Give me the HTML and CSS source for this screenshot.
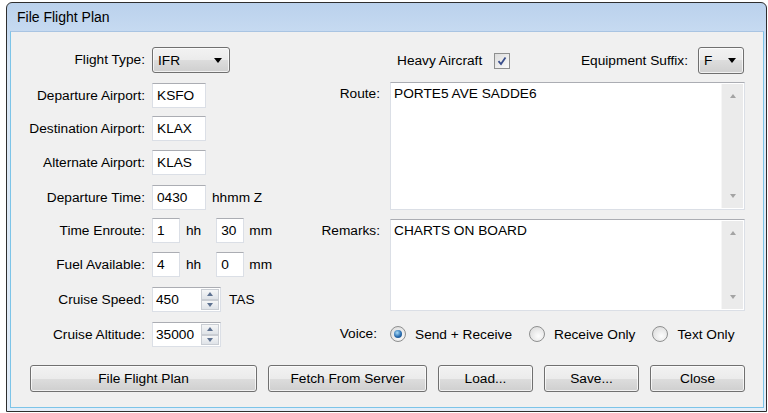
FILE: index.html
```html
<!DOCTYPE html>
<html lang="en">
<head>
  <meta charset="utf-8">
  <title>File Flight Plan</title>
  <link rel="stylesheet" href="styles.css">
</head>
<body>
  <div class="window">
    <div class="titlebar">File Flight Plan</div>

    <div class="client">
      <div class="main">

        <!-- left column: flight data -->
        <div class="left">
          <span class="lbl tall">Flight Type:</span>
          <div class="combo type">
            <span>IFR</span>
            <svg width="8" height="5" viewBox="0 0 8 5"><polygon points="0,0 8,0 4,5" fill="#000"/></svg>
          </div>

          <span class="lbl">Departure Airport:</span>
          <div class="field"><span class="edit w54">KSFO</span></div>

          <span class="lbl">Destination Airport:</span>
          <div class="field"><span class="edit w54">KLAX</span></div>

          <span class="lbl">Alternate Airport:</span>
          <div class="field"><span class="edit w54">KLAS</span></div>

          <span class="lbl">Departure Time:</span>
          <div class="field"><span class="edit w54">0430</span><span class="unit">hhmm Z</span></div>

          <span class="lbl">Time Enroute:</span>
          <div class="field">
            <span class="edit w28">1</span><span class="unit hh">hh</span>
            <span class="edit w28">30</span><span class="unit mm">mm</span>
          </div>

          <span class="lbl">Fuel Available:</span>
          <div class="field">
            <span class="edit w28">4</span><span class="unit hh">hh</span>
            <span class="edit w28">0</span><span class="unit mm">mm</span>
          </div>

          <span class="lbl">Cruise Speed:</span>
          <div class="field">
            <div class="spin"><span class="spin-text">450</span><div class="spin-btns"><i class="sb up"></i><i class="sb down"></i></div></div>
            <span class="unit tas">TAS</span>
          </div>

          <span class="lbl">Cruise Altitude:</span>
          <div class="field">
            <div class="spin"><span class="spin-text">35000</span><div class="spin-btns"><i class="sb up"></i><i class="sb down"></i></div></div>
          </div>
        </div>

        <!-- right column: route, remarks, voice -->
        <div class="right">
          <span></span>
          <div class="toprow">
            <span class="heavy">Heavy Aircraft</span>
            <span class="check">
              <svg width="14" height="14" viewBox="0 0 14 14"><path d="M3.5 7.2 L6 10 L10.5 3.5" fill="none" stroke="#3b4f8c" stroke-width="1.8"/></svg>
            </span>
            <span class="suffix">Equipment Suffix:</span>
            <div class="combo eq">
              <span>F</span>
              <svg width="8" height="5" viewBox="0 0 8 5"><polygon points="0,0 8,0 4,5" fill="#000"/></svg>
            </div>
          </div>

          <span class="lbl top">Route:</span>
          <div class="memo route">
            <div class="memo-text">PORTE5 AVE SADDE6</div>
            <div class="vscroll"><i class="arr up"></i><i class="arr down"></i></div>
          </div>

          <span class="lbl top">Remarks:</span>
          <div class="memo remarks">
            <div class="memo-text">CHARTS ON BOARD</div>
            <div class="vscroll"><i class="arr up"></i><i class="arr down"></i></div>
          </div>

          <span class="lbl voice">Voice:</span>
          <div class="radios">
            <span class="radio on"></span><span class="rtext">Send + Receive</span>
            <span class="radio"></span><span class="rtext">Receive Only</span>
            <span class="radio"></span><span class="rtext">Text Only</span>
          </div>
        </div>
      </div>

      <div class="buttons">
        <button class="btn file">File Flight Plan</button>
        <button class="btn fetch">Fetch From Server</button>
        <button class="btn small">Load...</button>
        <button class="btn small">Save...</button>
        <button class="btn small">Close</button>
      </div>
    </div>
  </div>
</body>
</html>
```

FILE: styles.css
```css
/* Windows 7 style dialog */
body {
  margin: 0;
  background: #fff;
  font-family: "Liberation Sans", Arial, sans-serif;
  font-size: 13.7px;
  color: #000;
}
.window {
  box-sizing: border-box;
  width: 761px;
  height: 410px;
  margin: 2px 0 0 6px;
  border: 1px solid #2e2e2e;
  border-radius: 6px 6px 0 0;
  background: linear-gradient(#bad1ec 0, #c6daf1 28px, #d9e7f5 60px, #e3edf8 100%);
  display: flex;
  flex-direction: column;
}
.titlebar {
  height: 28px;
  line-height: 28px;
  padding-left: 10px;
  font-size: 14px;
  color: #000;
}
.client {
  flex: 1;
  margin: 0 2px 3px 3px;
  border: 1px solid #7cc4e8;
  border-top-color: #a9c4e2;
  background: #f0f0f0;
  padding-top: 15px;
}
.main {
  display: flex;
}

/* left grid */
.left {
  width: 289px;
  display: grid;
  grid-template-columns: 134px auto;
  column-gap: 7px;
  grid-template-rows: 36px 33px 34px 35px 33px 34px 35px 35px 26px;
  align-items: start;
}
.lbl {
  text-align: right;
  line-height: 25px;
  white-space: nowrap;
}
.lbl.tall {
  line-height: 26px;
}
.field {
  display: flex;
  align-items: center;
  height: 25px;
}
.edit {
  box-sizing: border-box;
  height: 25px;
  line-height: 23px;
  padding-left: 4px;
  background: #fff;
  border: 1px solid #dbdfe6;
  border-top-color: #abadb3;
}
.w54 { width: 54px; }
.w28 { width: 28px; }
.unit { margin-left: 6px; }
.unit.hh { margin-right: 15px; }
.unit.mm { margin-left: 5px; }
.unit.tas { margin-left: 8px; }

/* combo boxes and buttons share the Aero look */
.combo, .btn {
  box-sizing: border-box;
  border: 1px solid #707070;
  border-radius: 3px;
  background: linear-gradient(#f2f2f2 0%, #ebebeb 50%, #dddddd 50%, #cfcfcf 100%);
  box-shadow: inset 0 0 0 1px rgba(255,255,255,0.7);
}
.combo {
  display: flex;
  align-items: center;
  justify-content: space-between;
  height: 26px;
  padding: 0 7px 0 5px;
}
.combo.type { width: 78px; }
.combo.eq { width: 46px; height: 27px; }

/* numeric spinners */
.spin {
  box-sizing: border-box;
  width: 69px;
  height: 25px;
  display: flex;
  background: #fff;
  border: 1px solid #dbdfe6;
  border-top-color: #abadb3;
}
.spin-text {
  flex: 1;
  line-height: 23px;
  padding-left: 3px;
}
.spin-btns {
  width: 18px;
  margin: 1px;
  display: flex;
  flex-direction: column;
}
.sb {
  flex: 1;
  box-sizing: border-box;
  border: 1px solid #c9cdd3;
  background: linear-gradient(#f5f6f7, #dfe3e8);
  display: flex;
  align-items: center;
  justify-content: center;
}
.sb::after {
  content: "";
  border-left: 3.5px solid transparent;
  border-right: 3.5px solid transparent;
}
.sb.up::after { border-bottom: 4px solid #5d7190; }
.sb.down::after { border-top: 4px solid #5d7190; }

/* right grid */
.right {
  display: grid;
  grid-template-columns: 80px 355px;
  column-gap: 10px;
  grid-template-rows: 35px 137px 101px 28px;
  align-items: start;
}
.toprow {
  display: flex;
  align-items: center;
  height: 27px;
  padding-left: 7px;
}
.check {
  box-sizing: border-box;
  width: 16px;
  height: 16px;
  margin-left: 12px;
  border: 1px solid #8e8f8f;
  background: linear-gradient(135deg, #dcdcdc, #fbfbfb);
  display: flex;
  align-items: center;
  justify-content: center;
}
.suffix {
  margin-left: auto;
  margin-right: 10px;
}
.combo.eq {
  margin-right: 1px;
}
.lbl.top {
  line-height: 17px;
  padding-top: 3px;
}
.memo {
  box-sizing: border-box;
  display: flex;
  background: #fff;
  border: 1px solid #dbdfe6;
  border-top-color: #abadb3;
}
.memo.route { height: 128px; }
.memo.remarks { height: 92px; }
.memo-text {
  flex: 1;
  padding: 2px 3px;
  line-height: 17px;
}
.vscroll {
  width: 21px;
  margin: 1px;
  background: #ebebeb;
  border-left: 1px solid #f6f6f6;
  display: flex;
  flex-direction: column;
  justify-content: space-between;
}
.arr {
  height: 24px;
  display: flex;
  align-items: center;
  justify-content: center;
}
.arr::after {
  content: "";
  border-left: 3.5px solid transparent;
  border-right: 3.5px solid transparent;
}
.arr.up::after { border-bottom: 4px solid #a3a3a3; }
.arr.down::after { border-top: 4px solid #a3a3a3; }

/* voice radios */
.lbl.voice {
  line-height: 28px;
  padding-right: 3px;
}
.radios {
  display: flex;
  align-items: center;
  height: 28px;
}
.radio {
  box-sizing: border-box;
  width: 16px;
  height: 16px;
  border: 1px solid #8e8f8f;
  border-radius: 50%;
  background: radial-gradient(circle at 60% 65%, #fdfdfd, #d6d6d6);
  display: flex;
  align-items: center;
  justify-content: center;
}
.radio.on::after {
  content: "";
  width: 8px;
  height: 8px;
  border-radius: 50%;
  background: radial-gradient(circle at 40% 35%, #a8dcf8, #2a6db0 55%, #0f3f75);
}
.rtext {
  margin-left: 9px;
  margin-right: 17px;
}
.rtext:last-child {
  margin-right: 0;
}

/* button row */
.buttons {
  display: flex;
  gap: 11px;
  margin-top: 17px;
  padding-left: 19px;
}
.btn {
  height: 27px;
  font: inherit;
  color: #000;
  padding: 0;
}
.btn.file { width: 227px; }
.btn.fetch { width: 159px; }
.btn.small { width: 95px; }
```
